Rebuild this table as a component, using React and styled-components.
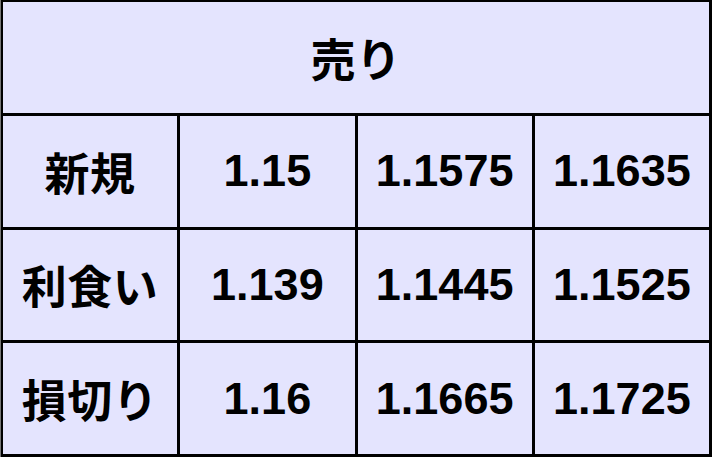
import React from "react";
import styled, { createGlobalStyle } from "styled-components";

const Global = createGlobalStyle`
  html, body { margin: 0; padding: 0; background: #fff; }
  #root { width: 712px; height: 457px; }
`;

const Table = styled.div`
  box-sizing: border-box;
  width: 712px;
  height: 457px;
  display: grid;
  grid-template-columns: repeat(4, 1fr);
  grid-template-rows: repeat(4, 1fr);
  gap: 3px;
  padding: 2px 3px 3px 2px;
  background: #000;
  border-left: 1px solid #777;
`;

const Cell = styled.div`
  background: #e4e4fe;
  display: flex;
  align-items: center;
  justify-content: center;
  font-family: "Liberation Sans", "Noto Sans CJK JP", sans-serif;
  font-weight: 700;
  font-size: 45px;
  color: #000;
  grid-column: ${(p) => (p.$span ? "1 / -1" : "auto")};
  letter-spacing: ${(p) => (p.$jp ? "0.5px" : "0")};
`;

const rows = [
  ["新規", "1.15", "1.1575", "1.1635"],
  ["利食い", "1.139", "1.1445", "1.1525"],
  ["損切り", "1.16", "1.1665", "1.1725"],
];

export default function App() {
  return (
    <>
      <Global />
      <Table>
        <Cell $span $jp>売り</Cell>
        {rows.map((r) =>
          r.map((v, i) => (
            <Cell key={r[0] + i} $jp={i === 0}>
              {v}
            </Cell>
          ))
        )}
      </Table>
    </>
  );
}
